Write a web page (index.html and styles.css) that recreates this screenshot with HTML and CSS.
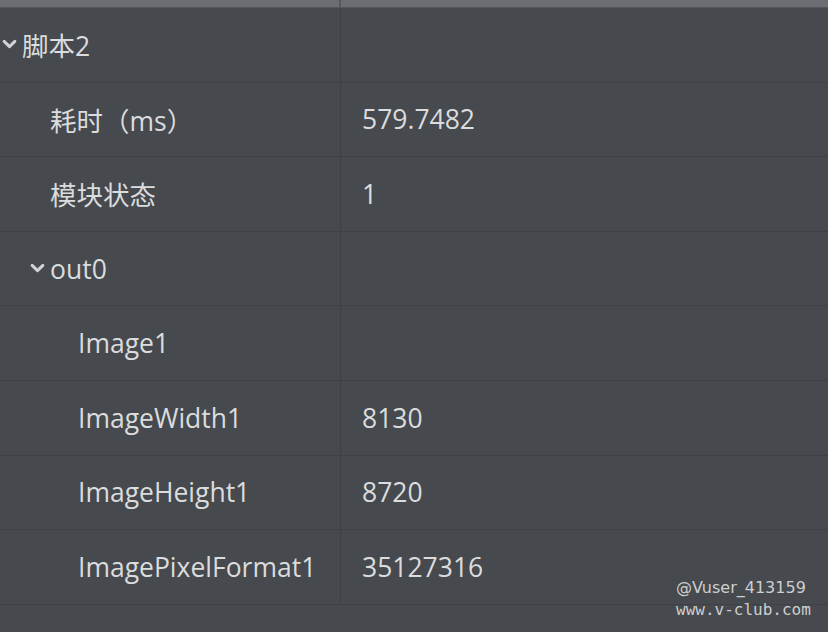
FILE: index.html
```html
<!DOCTYPE html>
<html lang="zh">
<head>
<meta charset="utf-8">
<link rel="stylesheet" href="styles.css">
</head>
<body>
<div class="panel">
  <div class="header">
    <div class="hcell name"></div>
    <div class="hcell"></div>
  </div>
  <div class="rows">
    <div class="row">
      <div class="cell name lvl0"><svg class="chev" viewBox="0 0 14 9"><path d="M2 2 L7 7 L12 2"/></svg>脚本2</div>
      <div class="cell val"></div>
    </div>
    <div class="row">
      <div class="cell name lvl1">耗时（ms）</div>
      <div class="cell val">579.7482</div>
    </div>
    <div class="row">
      <div class="cell name lvl1">模块状态</div>
      <div class="cell val">1</div>
    </div>
    <div class="row">
      <div class="cell name lvl1c"><svg class="chev" viewBox="0 0 14 9"><path d="M2 2 L7 7 L12 2"/></svg>out0</div>
      <div class="cell val"></div>
    </div>
    <div class="row">
      <div class="cell name lvl2">Image1</div>
      <div class="cell val"></div>
    </div>
    <div class="row">
      <div class="cell name lvl2">ImageWidth1</div>
      <div class="cell val">8130</div>
    </div>
    <div class="row">
      <div class="cell name lvl2">ImageHeight1</div>
      <div class="cell val">8720</div>
    </div>
    <div class="row">
      <div class="cell name lvl2">ImagePixelFormat1</div>
      <div class="cell val">35127316</div>
    </div>
  </div>
  <div class="watermark">
    <div class="wm1">@Vuser_413159</div>
    <div class="wm2">www.v-club.com</div>
  </div>
</div>
</body>
</html>
```
FILE: styles.css
```css
html, body {
  margin: 0;
  padding: 0;
  background: #46494d;
}
.panel {
  position: relative;
  width: 828px;
  height: 632px;
  overflow: hidden;
  background: #46494d;
  font-family: "Open Sans", "Noto Sans CJK SC", sans-serif;
  color: #dadcde;
  font-size: 26.5px;
}
.header {
  display: grid;
  grid-template-columns: 341px 1fr;
  height: 7px;
  background: #6b6f73;
  border-bottom: 1px solid #54585c;
}
.header .name {
  border-right: 2px solid #55595d;
}
.rows {
  display: flex;
  flex-direction: column;
}
.row {
  display: grid;
  grid-template-columns: 341px 1fr;
  height: 74.6px;
  box-sizing: border-box;
  border-bottom: 1px solid #3e4145;
}
.cell {
  display: flex;
  align-items: center;
  white-space: nowrap;
}
.cell.name {
  border-right: 1px solid #3e4145;
}
.cell.val {
  padding-left: 21px;
}
.lvl0 { padding-left: 2px; }
.lvl1 { padding-left: 50px; }
.lvl1c { padding-left: 30px; }
.lvl2 { padding-left: 78px; }
.chev {
  width: 15px;
  height: 10px;
  margin-right: 5px;
  margin-top: -2px;
}
.chev path {
  fill: none;
  stroke: #d0d2d4;
  stroke-width: 2.8;
  stroke-linecap: round;
  stroke-linejoin: round;
}
.watermark {
  position: absolute;
  left: 676px;
  top: 578px;
  color: #cdcecf;
}
.wm1 {
  font-family: "DejaVu Sans", sans-serif;
  font-size: 16px;
  line-height: 20px;
}
.wm2 {
  font-family: "DejaVu Sans Mono", monospace;
  font-size: 16px;
  line-height: 20px;
  margin-top: 2px;
}
```
